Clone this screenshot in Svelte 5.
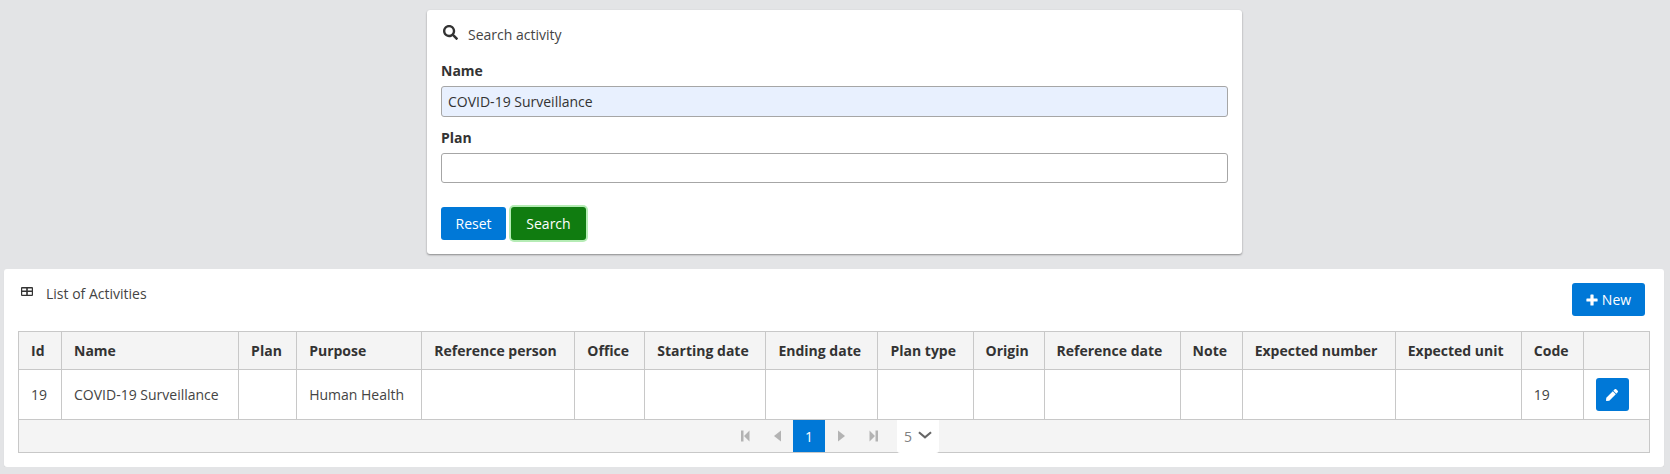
<script lang="ts">
	const columns = [
		{ label: 'Id', width: 43 },
		{ label: 'Name', width: 177 },
		{ label: 'Plan', width: 58 },
		{ label: 'Purpose', width: 125 },
		{ label: 'Reference person', width: 153 },
		{ label: 'Office', width: 70 },
		{ label: 'Starting date', width: 121 },
		{ label: 'Ending date', width: 112 },
		{ label: 'Plan type', width: 95 },
		{ label: 'Origin', width: 71 },
		{ label: 'Reference date', width: 136 },
		{ label: 'Note', width: 62 },
		{ label: 'Expected number', width: 153 },
		{ label: 'Expected unit', width: 126 },
		{ label: 'Code', width: 62 },
		{ label: '', width: 66 }
	];

	const row = ['19', 'COVID-19 Surveillance', '', 'Human Health', '', '', '', '', '', '', '', '', '', '', '19'];
</script>

<div class="page">
	<section class="card search-card">
		<div class="title search-title">
			<svg class="search-icon" viewBox="0 0 512 512" aria-hidden="true">
				<path d="M505 442.700L405.300 343c-4.500-4.500-10.600-7-17-7H372c27.600-35.300 44-79.700 44-128C416 93.100 322.900 0 208 0S0 93.100 0 208s93.100 208 208 208c48.300 0 92.700-16.400 128-44v16.300c0 6.400 2.500 12.500 7 17l99.700 99.700c9.400 9.400 24.600 9.400 33.900 0l28.300-28.300c9.400-9.400 9.400-24.600.1-34zM208 336c-70.700 0-128-57.200-128-128 0-70.700 57.200-128 128-128 70.700 0 128 57.200 128 128 0 70.700-57.200 128-128 128z" />
			</svg>
			<span>Search activity</span>
		</div>

		<label class="field" for="name">Name</label>
		<input id="name" class="input filled" type="text" value="COVID-19 Surveillance" />

		<label class="field plan-label" for="plan">Plan</label>
		<input id="plan" class="input plan-input" type="text" />

		<div class="actions">
			<button class="btn reset">Reset</button>
			<button class="btn search">Search</button>
		</div>
	</section>

	<section class="card list-card">
		<div class="list-head">
			<div class="title">
				<svg class="table-icon" viewBox="0 0 12 9" aria-hidden="true">
					<path d="M1 0h10a1 1 0 0 1 1 1v7a1 1 0 0 1-1 1H1a1 1 0 0 1-1-1V1a1 1 0 0 1 1-1zm.2 1.500v2h4v-2zm5.600 0v2h4v-2zm-5.600 3.500v2.800h4V5zm5.600 0v2.800h4V5z" fill-rule="evenodd" />
				</svg>
				<span>List of Activities</span>
			</div>
			<button class="btn new">
				<svg class="plus" viewBox="0 0 12 12" aria-hidden="true">
					<path d="M4.400 1a.6.6 0 0 1 .6-.6h2a.6.6 0 0 1 .6.6v3.400H11a.6.6 0 0 1 .6.6v2a.6.6 0 0 1-.6.6H7.600V11a.6.6 0 0 1-.6.6H5a.6.6 0 0 1-.6-.6V7.600H1a.6.6 0 0 1-.6-.6V5a.6.6 0 0 1 .6-.6h3.400z" />
				</svg>
				New
			</button>
		</div>

		<table>
			<colgroup>
				{#each columns as column}
					<col style={`width:${column.width}px`} />
				{/each}
			</colgroup>
			<thead>
				<tr>
					{#each columns as column}
						<th>{column.label}</th>
					{/each}
				</tr>
			</thead>
			<tbody>
				<tr>
					{#each row as value}
						<td>{value}</td>
					{/each}
					<td>
						<button class="btn edit" aria-label="Edit">
							<svg viewBox="0 0 512 512" aria-hidden="true">
								<path d="M290.700 93.200l128 128-278 278-114.100 12.600C11.300 513.500-1.600 500.600.100 485.300l12.700-114.200 277.900-277.900zm207.200-19.100l-60.100-60.100c-18.800-18.800-49.200-18.800-68 0l-56.500 56.500 128 128 56.500-56.500c18.800-18.800 18.800-49.200.1-67.900z" />
							</svg>
						</button>
					</td>
				</tr>
			</tbody>
			<tfoot>
				<tr>
					<td colspan={columns.length}>
						<div class="paginator">
							<span class="page-btn"><svg viewBox="0 0 9 12" aria-hidden="true"><path d="M0 .5h2.500v11H0zM8.500 .5v11L3 6z" /></svg></span>
							<span class="page-btn"><svg viewBox="0 0 9 12" aria-hidden="true"><path d="M8 .5v11L1 6z" /></svg></span>
							<span class="page-btn current">1</span>
							<span class="page-btn"><svg viewBox="0 0 9 12" aria-hidden="true"><path d="M1 .5v11L8 6z" /></svg></span>
							<span class="page-btn"><svg viewBox="0 0 9 12" aria-hidden="true"><path d="M.5 .5v11L6 6zM6.500 .5H9v11H6.500z" /></svg></span>
							<div class="page-size">
								<span>5</span>
								<svg viewBox="0 0 15 8" aria-hidden="true"><path d="M1 1l6.500 5.500L14 1" /></svg>
							</div>
						</div>
					</td>
				</tr>
			</tfoot>
		</table>
	</section>
</div>

<style>
	:global(body) {
		margin: 0;
		background: #e3e4e6;
	}

	.page {
		display: flex;
		flex-direction: column;
		align-items: center;
		gap: 15px;
		padding: 10px 6px 0 4px;
		font-family: 'Open Sans', sans-serif;
		font-size: 14px;
		color: #333;
	}

	.card {
		box-sizing: border-box;
		background: #fff;
		border-radius: 3px;
		box-shadow: 0 1px 2px rgba(0, 0, 0, 0.4);
	}

	.search-card {
		width: 815px;
		height: 244px;
		margin-left: 1px;
		padding: 15px 14px 0;
	}

	.list-card {
		width: 100%;
		height: 198px;
		padding: 14px 14px 0;
		box-shadow: 0 1px 1px rgba(0, 0, 0, 0.08);
	}

	.title {
		display: flex;
		align-items: center;
		line-height: 19px;
		color: #444;
	}

	.search-title {
		gap: 10px;
		padding: 0 2px;
	}

	.search-icon {
		width: 15px;
		height: 15px;
		margin-top: -4px;
		fill: #333;
	}

	.field {
		display: block;
		margin-top: 17px;
		font-weight: 700;
		line-height: 19px;
	}

	.field.plan-label {
		margin-top: 11px;
	}

	.input {
		display: block;
		box-sizing: border-box;
		width: 787px;
		height: 31px;
		margin-top: 6px;
		padding: 0 6px;
		border: 1px solid #a6a6a6;
		border-radius: 3px;
		background: #fff;
		font: inherit;
		color: #333;
	}

	.plan-input {
		height: 30px;
	}

	.filled {
		background: #e8f0fe;
	}

	.actions {
		display: flex;
		gap: 5px;
		margin-top: 24px;
	}

	.btn {
		box-sizing: border-box;
		height: 33px;
		padding: 0;
		border: 0;
		border-radius: 3px;
		background: #0078d7;
		color: #fff;
		font: inherit;
	}

	.reset {
		width: 65px;
	}

	.search {
		width: 75px;
		background: #107c10;
		box-shadow: 0 0 0 2px #b5ecb5;
	}

	.list-head {
		display: flex;
		justify-content: space-between;
		height: 48px;
	}

	.list-head .title {
		gap: 13px;
		align-self: flex-start;
		padding: 0 0 0 3px;
		margin-top: 1px;
	}

	.table-icon {
		width: 12px;
		height: 9px;
		margin-top: -5px;
		fill: #333;
	}

	.new {
		display: flex;
		align-items: center;
		justify-content: center;
		gap: 4px;
		width: 73px;
		margin: 0 5px 0 0;
	}

	.plus {
		width: 12px;
		height: 12px;
		fill: #fff;
	}

	table {
		width: 1632px;
		table-layout: fixed;
		border-collapse: collapse;
	}

	th,
	td {
		padding: 0 12px;
		border: 1px solid #c8c8c8;
		text-align: left;
		white-space: nowrap;
		overflow: hidden;
	}

	th {
		height: 37px;
		background: #f4f4f4;
		font-weight: 700;
	}

	tbody td {
		height: 49px;
		line-height: 19px;
		color: #444;
	}

	tfoot td {
		height: 32px;
		padding: 0;
		background: #f4f4f4;
		overflow: visible;
	}

	.edit {
		display: flex;
		align-items: center;
		justify-content: center;
		width: 33px;
	}

	.edit svg {
		width: 12px;
		height: 12px;
		fill: #fff;
	}

	.paginator {
		display: flex;
		justify-content: center;
		height: 32px;
	}

	.page-btn {
		display: flex;
		align-items: center;
		justify-content: center;
		width: 32px;
		height: 32px;
	}

	.page-btn svg {
		width: 9px;
		height: 12px;
		fill: #b3b3b3;
	}

	.current {
		background: #0078d7;
		color: #fff;
	}

	.page-size {
		display: flex;
		align-items: center;
		gap: 6px;
		box-sizing: border-box;
		width: 42px;
		height: 33px;
		padding: 0 7px;
		margin-left: 8px;
		background: #fff;
		border-radius: 0 0 3px 3px;
		color: #808080;
	}

	.page-size svg {
		width: 15px;
		height: 8px;
		margin-top: -3px;
		fill: none;
		stroke: #666;
		stroke-width: 2.200;
	}
</style>
